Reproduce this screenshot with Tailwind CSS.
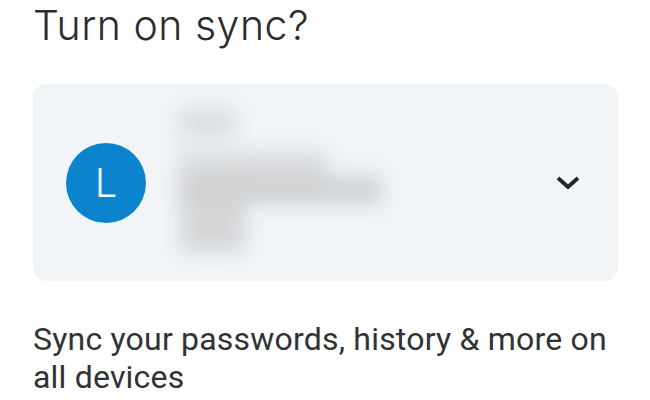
<!DOCTYPE html>
<html lang="en">
<head>
<meta charset="UTF-8">
<title>Turn on sync?</title>
<script src="https://cdn.jsdelivr.net/npm/@tailwindcss/browser@4"></script>
</head>
<body class="bg-white w-[650px] h-[400px] overflow-hidden font-['Roboto',sans-serif]">
  <div class="pl-[33px] pr-[33px]">
    <h1 class="h-[84px] text-[41px] leading-[50px] tracking-[0.5px] text-[#2b2c2e] font-['Inter',sans-serif] font-light">Turn on sync?</h1>

    <!-- account picker -->
    <div class="h-[197px] w-[585px] rounded-[14px] bg-[#f2f5f7] flex items-center pl-[33px] pr-[36px]">
      <div class="w-[80px] h-[80px] shrink-0 rounded-full bg-[#0b84cd] flex items-center justify-center text-[#eafaff] text-[40px] font-['Inter',sans-serif] font-light">L</div>

      <!-- blurred out account name -->
      <div class="ml-[32px] w-[208px] h-[150px] flex flex-col blur-[10px]">
        <div class="w-[58px] h-[30px] bg-[#dcdee0]"></div>
        <div class="mt-[14px] w-[150px] h-[24px] bg-[#d9dbdd]"></div>
        <div class="w-[204px] h-[28px] bg-[#cfd1d3]"></div>
        <div class="ml-[2px] w-[66px] h-[48px] bg-[#d4d6d8]"></div>
      </div>

      <svg class="ml-auto" width="28" height="28" viewBox="0 0 28 28" fill="none" stroke="#25272a" stroke-width="3.8">
        <path d="M4 9 L14 18 L24 9" stroke-linejoin="round"/>
      </svg>
    </div>

    <p class="mt-[39px] text-[32px] leading-[38px] tracking-[0.2px] text-[#303234]">Sync your passwords, history &amp; more on all devices</p>
  </div>
</body>
</html>
